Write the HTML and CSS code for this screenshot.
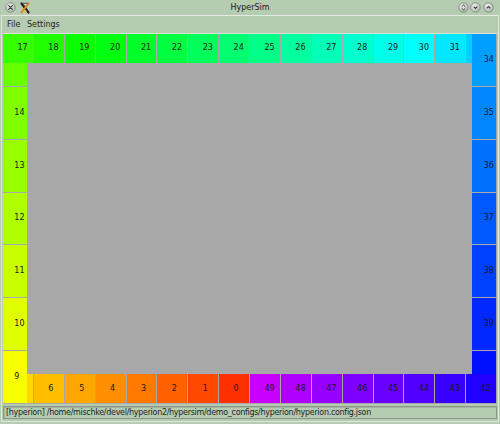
FILE: index.html
```html
<!DOCTYPE html>
<html>
<head>
<meta charset="utf-8">
<title>HyperSim</title>
<link rel="stylesheet" href="styles.css">
</head>
<body>
<div class="window">
  <div class="titlebar">
    <div class="tb-left">
      <svg class="wbtn" width="11" height="11" viewBox="0 0 11 11">
        <defs><radialGradient id="g1" cx="40%" cy="35%" r="70%"><stop offset="0" stop-color="#f2f4f1"/><stop offset="1" stop-color="#a3ada1"/></radialGradient></defs>
        <circle cx="5.5" cy="5.5" r="4.8" fill="url(#g1)" stroke="#7f8a7d" stroke-width="0.8"/>
        <path d="M3.7 3.7L7.3 7.3M7.3 3.7L3.7 7.3" stroke="#3a3a3a" stroke-width="1.1" stroke-linecap="round"/>
      </svg>
      <svg class="appicon" width="10" height="12" viewBox="0 0 10 12">
        <path d="M1.5 1.5L8.5 10.5" stroke="#222" stroke-width="2.2" stroke-linecap="round"/>
        <path d="M8.5 1.5L1.5 10.5" stroke="#e8841a" stroke-width="2" stroke-linecap="round"/>
        <path d="M2 1.2H8" stroke="#555" stroke-width="1"/>
        <path d="M3.5 9L6.5 9" stroke="#f2c14a" stroke-width="1.2"/>
      </svg>
    </div>
    <div class="title">HyperSim</div>
    <div class="tb-right">
      <svg class="wbtn" width="11" height="11" viewBox="0 0 11 11">
        <defs><radialGradient id="g2" cx="40%" cy="35%" r="70%"><stop offset="0" stop-color="#f2f4f1"/><stop offset="1" stop-color="#a3ada1"/></radialGradient></defs>
        <circle cx="5.5" cy="5.5" r="4.8" fill="url(#g2)" stroke="#7f8a7d" stroke-width="0.8"/>
        <path d="M3.8 4.6L5.5 3L7.2 4.6M3.8 6.4L5.5 8L7.2 6.4" fill="none" stroke="#3a3a3a" stroke-width="1"/>
      </svg>
      <svg class="wbtn" width="11" height="11" viewBox="0 0 11 11">
        <circle cx="5.5" cy="5.5" r="4.8" fill="url(#g2)" stroke="#7f8a7d" stroke-width="0.8"/>
        <path d="M3.7 4.6L5.5 6.4L7.3 4.6" fill="none" stroke="#3a3a3a" stroke-width="1.1"/>
      </svg>
      <svg class="wbtn" width="11" height="11" viewBox="0 0 11 11">
        <circle cx="5.5" cy="5.5" r="4.8" fill="url(#g2)" stroke="#7f8a7d" stroke-width="0.8"/>
        <path d="M3.7 6.4L5.5 4.6L7.3 6.4" fill="none" stroke="#3a3a3a" stroke-width="1.1"/>
      </svg>
    </div>
  </div>
  <div class="client">
    <div class="menubar">
      <span class="menu">File</span>
      <span class="menu">Settings</span>
    </div>
    <div class="canvas">
      <div class="led l" style="top:0px;background:hsl(95.625,100%,50%)"></div>
      <div class="led l" style="top:52.857px;background:hsl(90,100%,50%)"><span>14</span></div>
      <div class="led l" style="top:105.714px;background:hsl(84.375,100%,50%)"><span>13</span></div>
      <div class="led l" style="top:158.571px;background:hsl(78.75,100%,50%)"><span>12</span></div>
      <div class="led l" style="top:211.429px;background:hsl(73.125,100%,50%)"><span>11</span></div>
      <div class="led l" style="top:264.286px;background:hsl(67.5,100%,50%)"><span>10</span></div>
      <div class="led b" style="left:0px;background:hsl(50.625,100%,50%)"></div>
      <div class="led l" style="top:317.143px;background:hsl(61.875,100%,50%)"><span>9</span></div>

      <div class="led t" style="left:0px;background:hsl(106.875,100%,50%)"><span>17</span></div>
      <div class="led t" style="left:30.875px;background:hsl(112.5,100%,50%)"><span>18</span></div>
      <div class="led t" style="left:61.75px;background:hsl(118.125,100%,50%)"><span>19</span></div>
      <div class="led t" style="left:92.625px;background:hsl(123.75,100%,50%)"><span>20</span></div>
      <div class="led t" style="left:123.5px;background:hsl(129.375,100%,50%)"><span>21</span></div>
      <div class="led t" style="left:154.375px;background:hsl(135,100%,50%)"><span>22</span></div>
      <div class="led t" style="left:185.25px;background:hsl(140.625,100%,50%)"><span>23</span></div>
      <div class="led t" style="left:216.125px;background:hsl(146.25,100%,50%)"><span>24</span></div>
      <div class="led t" style="left:247px;background:hsl(151.875,100%,50%)"><span>25</span></div>
      <div class="led t" style="left:277.875px;background:hsl(157.5,100%,50%)"><span>26</span></div>
      <div class="led t" style="left:308.75px;background:hsl(163.125,100%,50%)"><span>27</span></div>
      <div class="led t" style="left:339.625px;background:hsl(168.75,100%,50%)"><span>28</span></div>
      <div class="led t" style="left:370.5px;background:hsl(174.375,100%,50%)"><span>29</span></div>
      <div class="led t" style="left:401.375px;background:hsl(180,100%,50%)"><span>30</span></div>
      <div class="led t" style="left:432.25px;background:hsl(185.625,100%,50%)"><span>31</span></div>
      <div class="led t" style="left:463.125px;background:hsl(191.25,100%,50%)"></div>

      <div class="led r" style="top:0px;background:hsl(202.5,100%,50%)"><span>34</span></div>
      <div class="led r" style="top:52.857px;background:hsl(208.125,100%,50%)"><span>35</span></div>
      <div class="led r" style="top:105.714px;background:hsl(213.75,100%,50%)"><span>36</span></div>
      <div class="led r" style="top:158.571px;background:hsl(219.375,100%,50%)"><span>37</span></div>
      <div class="led r" style="top:211.429px;background:hsl(225,100%,50%)"><span>38</span></div>
      <div class="led r" style="top:264.286px;background:hsl(230.625,100%,50%)"><span>39</span></div>
      <div class="led r" style="top:317.143px;background:hsl(236.25,100%,50%)"></div>

      <div class="led b" style="left:30.875px;background:hsl(45,100%,50%)"><span>6</span></div>
      <div class="led b" style="left:61.75px;background:hsl(39.375,100%,50%)"><span>5</span></div>
      <div class="led b" style="left:92.625px;background:hsl(33.75,100%,50%)"><span>4</span></div>
      <div class="led b" style="left:123.5px;background:hsl(28.125,100%,50%)"><span>3</span></div>
      <div class="led b" style="left:154.375px;background:hsl(22.5,100%,50%)"><span>2</span></div>
      <div class="led b" style="left:185.25px;background:hsl(16.875,100%,50%)"><span>1</span></div>
      <div class="led b" style="left:216.125px;background:hsl(11.25,100%,50%)"><span>0</span></div>
      <div class="led b" style="left:247px;background:hsl(286.875,100%,50%)"><span>49</span></div>
      <div class="led b" style="left:277.875px;background:hsl(281.25,100%,50%)"><span>48</span></div>
      <div class="led b" style="left:308.75px;background:hsl(275.625,100%,50%)"><span>47</span></div>
      <div class="led b" style="left:339.625px;background:hsl(270,100%,50%)"><span>46</span></div>
      <div class="led b" style="left:370.5px;background:hsl(264.375,100%,50%)"><span>45</span></div>
      <div class="led b" style="left:401.375px;background:hsl(258.75,100%,50%)"><span>44</span></div>
      <div class="led b" style="left:432.25px;background:hsl(253.125,100%,50%)"><span>43</span></div>
      <div class="led b" style="left:463.125px;background:hsl(247.5,100%,50%)"><span>42</span></div>
    </div>
    <div class="statusbar">
      <div class="status-box">[hyperion] /home/mischke/devel/hyperion2/hypersim/demo_configs/hyperion/hyperion.config.json</div>
    </div>
  </div>
</div>
</body>
</html>
```
FILE: styles.css
```css
* { box-sizing: border-box; }
html, body { margin: 0; padding: 0; }
body {
  width: 500px;
  height: 424px;
  overflow: hidden;
  background: #b5ccb2;
  font-family: "DejaVu Sans", "Liberation Sans", sans-serif;
  font-size: 8px;
  color: #1e1e1e;
}
.window {
  width: 500px;
  height: 424px;
  display: flex;
  flex-direction: column;
}
.titlebar {
  height: 15px;
  display: grid;
  grid-template-columns: 1fr auto 1fr;
  align-items: center;
  padding: 0 5px;
}
.tb-left {
  display: flex;
  align-items: center;
  gap: 4px;
}
.tb-right {
  display: flex;
  justify-content: flex-end;
  align-items: center;
  gap: 1.5px;
  margin-right: 1.5px;
}
.wbtn, .appicon { display: block; }
.title {
  font-size: 8px;
  color: #202020;
  line-height: 15px;
}
.client {
  flex: 1;
  display: flex;
  flex-direction: column;
  margin: 0 1px 2px;
  padding: 0 1px;
  border-top: 1px solid #e4ece2;
  border-left: 1px solid #dde7da;
  border-right: 1px solid #dde7da;
  border-bottom: 1px solid #dde7da;
}
.menubar {
  height: 18px;
  display: flex;
  align-items: center;
  gap: 6.5px;
  padding-left: 4px;
  border-bottom: 1px solid #d8e3d5;
}
.menu { color: #1e1e1e; }
.canvas {
  position: relative;
  width: 494px;
  height: 370px;
  background: #a8a8a8;
}
.led {
  position: absolute;
  display: flex;
  align-items: center;
  line-height: 1;
  color: #1a1a1a;
}
.led span { margin-left: calc(50% - 0.5px); }
.led.t { top: 0; width: 29.875px; height: 28.6px; }
.led.b { top: 340.4px; width: 29.875px; height: 28.6px; }
.led.l { left: 0; width: 23.7px; height: 51.857px; }
.led.r { left: 469.3px; width: 23.7px; height: 51.857px; }
.statusbar {
  flex: 1;
  padding-top: 2px;
}
.status-box {
  height: 13px;
  border: 1px solid #8a9788;
  box-shadow: inset 1px 1px 0 #a5b3a3;
  padding-left: 2px;
  line-height: 11px;
  white-space: nowrap;
  overflow: hidden;
  letter-spacing: -0.3px;
  color: #1e1e1e;
}
```
